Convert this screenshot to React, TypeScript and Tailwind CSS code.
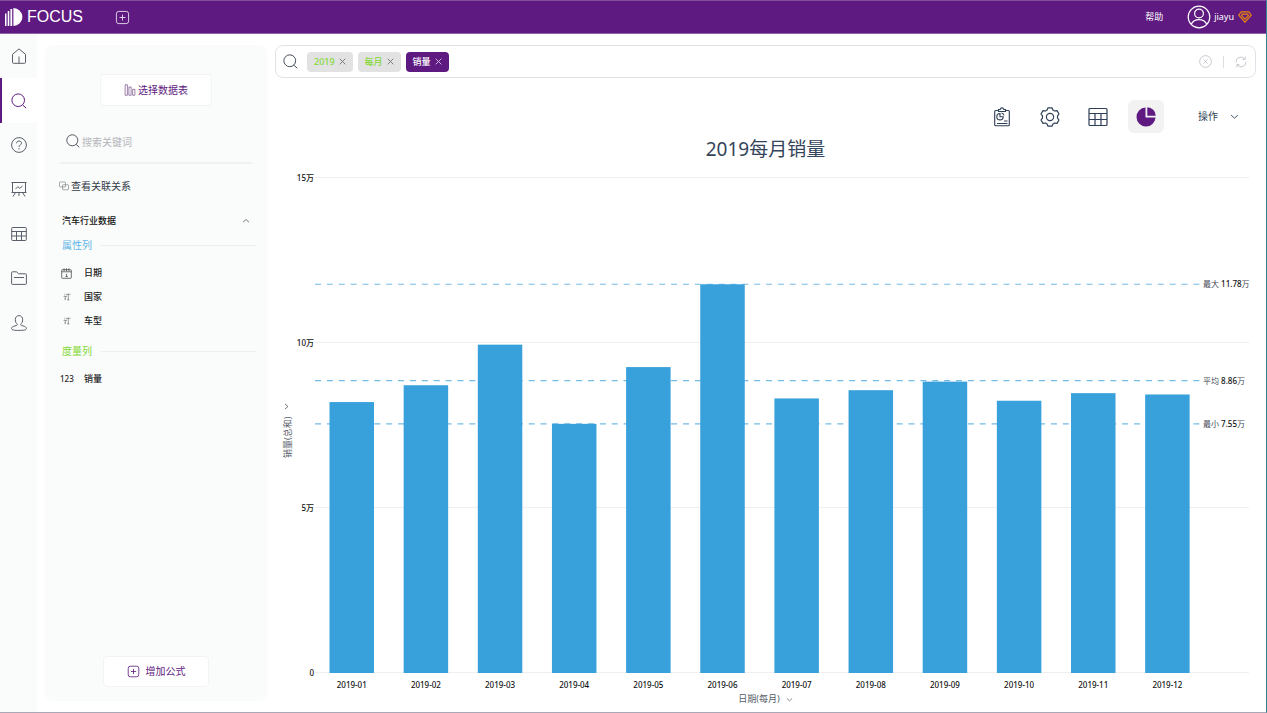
import { useState } from 'react';
import type { ReactNode } from 'react';

type IconProps = { size?: number; className?: string };

// 16x16 の線画アイコン共通ラッパー
function Line({ size = 16, className, children }: IconProps & { children: ReactNode }) {
  return (
    <svg
      width={size}
      height={size}
      viewBox="0 0 16 16"
      fill="none"
      stroke="currentColor"
      strokeWidth={1}
      className={className}
      aria-hidden="true"
    >
      {children}
    </svg>
  );
}

const HomeIcon = (p: IconProps) => (
  <Line {...p}>
    <path d="M1.5 6.3 8 .9l6.5 5.4v8.2a.8.8 0 0 1-.8.8H2.3a.8.8 0 0 1-.8-.8zM8 8.500v6.800" />
  </Line>
);

const SearchIcon = (p: IconProps) => (
  <Line {...p}>
    <circle cx="7.2" cy="7.2" r="6.3" />
    <path d="m11.6 11.900 3.600 3.300" />
  </Line>
);

const HelpIcon = (p: IconProps) => (
  <Line {...p}>
    <circle cx="8" cy="8" r="7.4" />
    <path d="M5.600 6.300C5.600 4.800 6.600 4 8 4s2.500.9 2.500 2.200c0 1.800-2.500 1.700-2.500 3.800M8 11.200v1.300" />
  </Line>
);

const BoardIcon = (p: IconProps) => (
  <Line {...p}>
    <path d="M.5 1.500h15M1.500 1.500v9.500M14.500 1.500v9.500M.5 11.500h15M4.500 11.500 2 15.500M11.500 11.500l2.500 4M8 11.500V15M4.500 8l2.300-2.300 2 1.600L11.500 5" />
  </Line>
);

const TableIcon = (p: IconProps) => (
  <Line {...p}>
    <rect x=".7" y="1.5" width="14.600" height="13" rx="1" />
    <path d="M.7 5.500h14.600M.7 10h14.600M5.500 5.500v9M10.500 5.500v9" />
  </Line>
);

const FolderIcon = (p: IconProps) => (
  <Line {...p}>
    <path d="M.6 13.500v-11a.7.7 0 0 1 .7-.7h4.400l1.800 2h7.200a.7.7 0 0 1 .7.7v9a.9.9 0 0 1-.9.9h-13a.9.9 0 0 1-.9-.9zM3 7.500h10" />
  </Line>
);

const UserIcon = (p: IconProps) => (
  <Line {...p}>
    <path d="M6.400 9.200C5 8.300 4.300 6.500 4.300 4.700 4.300 2.300 5.800.6 8 .6s3.700 1.700 3.700 4.100c0 1.800-.7 3.600-2.100 4.500 0 1 .8 1.300 2.400 1.700 2 .5 3.400 1.100 3.400 2.600 0 1.600-3 1.900-7.400 1.900S.6 15.100.6 13.500c0-1.500 1.400-2.100 3.400-2.600 1.600-.4 2.400-.7 2.400-1.700z" />
  </Line>
);

const PlusBoxIcon = (p: IconProps) => (
  <Line {...p}>
    <rect x="1.500" y="1.500" width="13" height="13" rx="2.500" />
    <path d="M8 4.800v6.400M4.800 8h6.400" />
  </Line>
);

const ColumnsIcon = (p: IconProps) => (
  <Line {...p}>
    <path d="M1.500 1h3v14h-3zM6.500 4h3v11h-3zM11.500 7h3v8h-3z" />
  </Line>
);

const RelationIcon = (p: IconProps) => (
  <Line {...p}>
    <rect x=".8" y="1.500" width="9.500" height="8" rx="1" />
    <rect x="5.700" y="6" width="9.500" height="8" rx="1" />
  </Line>
);

const CalendarIcon = (p: IconProps) => (
  <Line {...p}>
    <rect x="1" y="2.500" width="14" height="12.500" rx="1" />
    <path d="M1 5.500h14M4.500.5v4M8 .5v4M11.500.5v4M7 9h1.200v3.500M6.500 12.500h3.500" />
  </Line>
);

const TextTypeIcon = (p: IconProps) => (
  <Line {...p}>
    <path d="M6 2.500h9M10.500 2.500v11.500M8.500 14h4M1 6.500h7M4.500 6.500v6M3 12.500h3M2.500 2.500h1.500" />
  </Line>
);

const CloseIcon = (p: IconProps) => (
  <Line {...p}>
    <path d="m1.500 1.500 13 13M14.500 1.500l-13 13" strokeWidth={2} />
  </Line>
);

const ClearIcon = (p: IconProps) => (
  <Line {...p}>
    <circle cx="8" cy="8" r="7.200" />
    <path d="m5.500 5.500 5 5M10.500 5.500l-5 5" />
  </Line>
);

const RefreshIcon = (p: IconProps) => (
  <Line {...p}>
    <path d="M1.500 8.500A6.300 6.300 0 0 1 12.800 4M14.500 7.500A6.300 6.300 0 0 1 3.200 12M13.500 1v3.500H10M2.500 15v-3.500H6" strokeWidth={1.100} />
  </Line>
);

const ChevronIcon = (p: IconProps) => (
  <Line {...p}>
    <path d="m2 5.500 6 5.500 6-5.500" strokeWidth={1.600} />
  </Line>
);

function LogoMark() {
  return (
    <svg width="18" height="18" viewBox="0 0 18 18" fill="#fff" aria-hidden="true">
      <path d="M0 5.500h1.500V18H0zM2.700 3h1.600v15H2.700zM5.400 1h1.800v17H5.400zM8.400 0A9 9 0 0 1 8.400 18z" />
    </svg>
  );
}

function AvatarIcon() {
  return (
    <svg width="24" height="24" viewBox="0 0 24 24" fill="none" stroke="#fff" strokeWidth="1.200" aria-hidden="true">
      <circle cx="12" cy="12" r="10.800" />
      <circle cx="12" cy="8.500" r="4.400" />
      <path d="M4.200 19.300c1.600-3.200 4.400-4.600 7.800-4.600s6.200 1.400 7.800 4.600" />
    </svg>
  );
}

function DiamondIcon() {
  return (
    <svg width="14" height="12" viewBox="0 0 14 12" fill="none" stroke="#e8850c" strokeWidth="1.200" aria-hidden="true">
      <path d="M3.200.9h7.600l2.500 3.300L7 11.200.7 4.200z" />
      <path d="M4.500 3.200h5l1 1.300L7 8.200 3.500 4.500z" />
    </svg>
  );
}

function ReportIcon() {
  return (
    <svg width="20" height="20" viewBox="0 0 20 20" fill="none" stroke="currentColor" strokeWidth="1.100" aria-hidden="true">
      <path d="M6.500 3.500H3.700a1 1 0 0 0-1 1v13.300a1 1 0 0 0 1 1h12.600a1 1 0 0 0 1-1V4.500a1 1 0 0 0-1-1h-2.800" />
      <path d="M6.500 4.500v-2h1.700C8.400 1.400 9 .9 10 .9s1.600.5 1.800 1.600h1.700v2z" />
      <path d="M8 6.500a3.200 3.200 0 1 0 3.200 3.200H8z" />
      <path d="M9.500 6a3 3 0 0 1 2.500 2.500M12 14h3.500M5 16.500h10.500" />
    </svg>
  );
}

function GearIcon() {
  return (
    <svg width="20" height="20" viewBox="0 0 20 20" fill="none" stroke="currentColor" strokeWidth="1.200" strokeLinejoin="round" aria-hidden="true">
      <path d="M8 .8h4l.9 2.200c.6.300 1.200.6 1.700 1l2.400-.4 2 3.400-1.500 1.900c.1.700.1 1.500 0 2.200L19 13l-2 3.400-2.400-.4c-.5.4-1.100.7-1.700 1l-.9 2.200H8L7.100 17c-.6-.3-1.200-.6-1.700-1l-2.400.4L1 13l1.500-1.900c-.1-.7-.1-1.500 0-2.200L1 7l2-3.400 2.400.4c.5-.4 1.100-.7 1.700-1z" />
      <circle cx="10" cy="10" r="3.600" />
    </svg>
  );
}

function GridIcon() {
  return (
    <svg width="20" height="20" viewBox="0 0 20 20" fill="none" stroke="currentColor" strokeWidth="1.200" aria-hidden="true">
      <rect x="1" y="1.500" width="18" height="17" rx="1" />
      <path d="M1 6.500h18M1 12.500h18M7 6.500v12M13 6.500v12" />
    </svg>
  );
}

function PieIcon() {
  return (
    <svg width="20" height="20" viewBox="0 0 20 20" fill="#5e1a80" aria-hidden="true">
      <path d="M9.500.5v10h10A9.500 9.500 0 1 1 9.500.5z" />
      <path d="M11.300.2a8.700 8.700 0 0 1 8.500 8.500h-8.500z" />
    </svg>
  );
}

const navItems = [
  { label: '首页', Icon: HomeIcon },
  { label: '搜索', Icon: SearchIcon },
  { label: '帮助', Icon: HelpIcon },
  { label: '看板', Icon: BoardIcon },
  { label: '数据表', Icon: TableIcon },
  { label: '资源', Icon: FolderIcon },
  { label: '用户', Icon: UserIcon },
];

const initialTags = [
  { text: '2019', kind: 'filter' },
  { text: '每月', kind: 'filter' },
  { text: '销量', kind: 'measure' },
];

const sales = [
  { month: '2019-01', value: 8.21 },
  { month: '2019-02', value: 8.72 },
  { month: '2019-03', value: 9.95 },
  { month: '2019-04', value: 7.55 },
  { month: '2019-05', value: 9.27 },
  { month: '2019-06', value: 11.78 },
  { month: '2019-07', value: 8.32 },
  { month: '2019-08', value: 8.57 },
  { month: '2019-09', value: 8.83 },
  { month: '2019-10', value: 8.25 },
  { month: '2019-11', value: 8.48 },
  { month: '2019-12', value: 8.44 },
];

const ticks = [
  { value: 15, label: '15万' },
  { value: 10, label: '10万' },
  { value: 5, label: '5万' },
  { value: 0, label: '0' },
];

const refLines = [
  { name: '最大', value: 11.78 },
  { name: '平均', value: 8.86 },
  { name: '最小', value: 7.55 },
];

// グラフ座標
const BASE = 505;
const UNIT = 33;
const LEFT = 40;
const STEP = 74.15;
const BAR = 44.5;
const yOf = (v: number) => BASE - v * UNIT;

function SalesChart() {
  return (
    <svg viewBox="0 0 981 524" className="mt-[7px] block h-auto w-full text-[8px]" role="img" aria-label="2019每月销量">
      {ticks.map((t) => (
        <g key={t.value}>
          <line x1={LEFT} x2={974} y1={yOf(t.value) - 0.5} y2={yOf(t.value) - 0.5} stroke="#efefef" />
          <text x={LEFT - 1} y={yOf(t.value) + 3} textAnchor="end" fill="#111" className="font-medium">
            {t.label}
          </text>
        </g>
      ))}

      {refLines.map((r) => (
        <g key={r.name}>
          <line
            x1={LEFT}
            x2={926}
            y1={yOf(r.value)}
            y2={yOf(r.value)}
            stroke="#74bbe6"
            strokeWidth={1.2}
            strokeDasharray="6 5.87"
          />
          <text x={928} y={yOf(r.value) + 3} fill="#444b55">
            {r.name} <tspan fill="#111" className="font-medium">{r.value}</tspan>万
          </text>
        </g>
      ))}

      {sales.map((s, i) => (
        <g key={s.month}>
          <rect x={54.5 + i * STEP} y={yOf(s.value)} width={BAR} height={s.value * UNIT} fill="#38a1db" />
          <text x={54.5 + i * STEP + BAR / 2} y={520} textAnchor="middle" fill="#111" className="font-medium">
            {s.month}
          </text>
        </g>
      ))}

      <g fill="#555c66" transform="translate(16 290) rotate(-90)">
        <text className="text-[9px]">销量(总和)</text>
        <path d="m49-6 2.500 3 2.500-3" fill="none" stroke="#555c66" strokeWidth={0.8} />
      </g>
    </svg>
  );
}

function Field({ icon, name }: { icon: ReactNode; name: string }) {
  return (
    <li>
      <button className="flex h-6 w-full items-center text-[9px] font-medium text-[#222]">
        <span className="flex w-6 items-center">{icon}</span>
        {name}
      </button>
    </li>
  );
}

function GroupTitle({ children, color }: { children: ReactNode; color: string }) {
  return (
    <div className={`flex items-center gap-2 pl-0.5 text-[10px] leading-4 ${color}`}>
      {children}
      <span className="h-px flex-1 bg-[#eef0f0]" />
    </div>
  );
}

function Sidebar() {
  const [open, setOpen] = useState(true);

  return (
    <aside className="my-[11px] ml-2 flex w-[222px] flex-shrink-0 flex-col rounded-lg bg-[#fafcfb] px-[11px] pb-[14px] pt-[29px]">
      <button className="flex h-8 w-28 items-center justify-center gap-0.5 self-center rounded border border-[#f1f3f5] bg-white text-[10px] text-[#5e1a80]">
        <ColumnsIcon size={12} className="text-[#7d5a92]" />
        选择数据表
      </button>

      <label className="mx-1 mt-6 flex h-[34px] items-start gap-0.5 border-b-2 border-[#f0f2f2] pl-[6px] pt-1">
        <SearchIcon size={14} className="flex-shrink-0 text-[#3d4450]" />
        <input
          type="text"
          aria-label="搜索关键词"
          placeholder="搜索关键词"
          className="h-4 w-full min-w-0 bg-transparent text-[10px] outline-none placeholder:text-[#b3b3ba]"
        />
      </label>

      <button className="ml-[3px] mt-[14px] flex h-4 items-center gap-0.5 text-[10px] text-[#333b47]">
        <RelationIcon size={10} className="text-[#777]" />
        查看关联关系
      </button>

      <button
        className="mt-[19px] flex h-4 items-center justify-between px-[6px] text-[9px] font-medium text-[#111]"
        aria-expanded={open}
        onClick={() => setOpen(!open)}
      >
        汽车行业数据
        <ChevronIcon size={8} className="rotate-180 text-[#555]" />
      </button>

      {open && (
        <div className="mt-2 pl-1">
          <GroupTitle color="text-[#5db4e6]">属性列</GroupTitle>
          <ul className="mt-2">
            <Field icon={<CalendarIcon size={11} className="ml-px text-[#333]" />} name="日期" />
            <Field icon={<TextTypeIcon size={8} className="ml-[3px] text-[#333]" />} name="国家" />
            <Field icon={<TextTypeIcon size={8} className="ml-[3px] text-[#333]" />} name="车型" />
          </ul>
          <div className="mt-[10px]">
            <GroupTitle color="text-[#84d936]">度量列</GroupTitle>
          </div>
          <ul className="mt-2">
            <Field icon={<span className="text-[8px]">123</span>} name="销量" />
          </ul>
        </div>
      )}

      <button className="mt-auto flex h-[31px] w-[106px] items-center justify-center gap-[6px] self-center rounded border border-[#f1f3f5] bg-white text-[10px] text-[#5e1a80]">
        <PlusBoxIcon size={13} />
        增加公式
      </button>
    </aside>
  );
}

function SearchBar() {
  const [tags, setTags] = useState(initialTags);

  return (
    <div className="flex h-[33px] items-center rounded-lg border border-[#dfe3e8] pl-[7px] pr-2">
      <SearchIcon size={15} className="flex-shrink-0 text-[#3d4450]" />
      <div className="ml-[9px] flex gap-[5px]">
        {tags.map((tag) => (
          <span
            key={tag.text}
            className={`flex h-5 items-center gap-1 rounded px-[7px] text-[9px] font-medium ${
              tag.kind === 'filter' ? 'bg-[#e2e2e2] text-[#84d936]' : 'bg-[#5e1a80] text-white'
            }`}
          >
            {tag.text}
            <button
              aria-label={`删除 ${tag.text}`}
              className={tag.kind === 'filter' ? 'text-[#6b7078]' : 'text-[#d8c8e2]'}
              onClick={() => setTags(tags.filter((t) => t !== tag))}
            >
              <CloseIcon size={7} />
            </button>
          </span>
        ))}
      </div>
      <input type="text" aria-label="搜索" className="mx-2 h-5 min-w-0 flex-1 bg-transparent text-[10px] outline-none" />
      <button aria-label="清空" className="text-[#b9bcc2]" onClick={() => setTags([])}>
        <ClearIcon size={13} />
      </button>
      <span className="mx-[11px] h-3 w-px bg-[#dcdee2]" />
      <button aria-label="刷新" className="text-[#b9bcc2]">
        <RefreshIcon size={12} />
      </button>
    </div>
  );
}

function Toolbar() {
  return (
    <div className="mt-[22px] flex justify-end gap-3 pr-[17px] text-[#2f3f55]">
      <button aria-label="报告" className="flex h-[33px] w-9 items-center justify-center">
        <ReportIcon />
      </button>
      <button aria-label="设置" className="flex h-[33px] w-9 items-center justify-center">
        <GearIcon />
      </button>
      <button aria-label="表格" className="flex h-[33px] w-9 items-center justify-center">
        <GridIcon />
      </button>
      <button aria-label="图表" className="flex h-[33px] w-9 items-center justify-center rounded-md bg-[#f2f2f2]">
        <PieIcon />
      </button>
      <button className="flex h-[33px] items-center gap-3 pl-[22px] text-[10px]">
        操作
        <ChevronIcon size={9} />
      </button>
    </div>
  );
}

export default function App() {
  return (
    <div className="flex min-h-screen flex-col border-b border-r border-b-[#a9a8b6] border-r-[#2f8496] bg-white font-['Noto_Sans','Noto_Sans_CJK_SC',sans-serif]">
      {/* ヘッダー */}
      <header className="flex h-[34px] flex-shrink-0 items-center border-y border-t-[#81509b] border-b-[#8f64a6] bg-[#5e1a80] pl-[5px] pr-[14px] text-white">
        <a href="#" className="flex items-center gap-1 font-['Liberation_Sans',sans-serif] text-base">
          <LogoMark />
          FOCUS
        </a>
        <button aria-label="新建" className="ml-8 text-[#e4d8ea]">
          <PlusBoxIcon size={15} />
        </button>
        <a href="#" className="ml-auto text-[9px]">
          帮助
        </a>
        <button className="ml-6 flex items-center gap-[3px] text-[9px]">
          <AvatarIcon />
          jiayu
          <span className="ml-px">
            <DiamondIcon />
          </span>
        </button>
      </header>

      <div className="flex flex-1">
        {/* 左ナビ */}
        <nav className="w-[37px] flex-shrink-0 bg-[#fafcfb]">
          <ul className="grid h-[311px] grid-rows-7">
            {navItems.map(({ label, Icon }) => (
              <li key={label} className="flex">
                <a
                  href="#"
                  aria-label={label}
                  className={`flex flex-1 items-center justify-center border-l-2 pr-0.5 ${
                    label === '搜索' ? 'border-[#5e1a80] bg-white text-[#5e1a80]' : 'border-transparent text-[#5a5f6a]'
                  }`}
                >
                  <Icon size={16} />
                </a>
              </li>
            ))}
          </ul>
        </nav>

        <Sidebar />

        <main className="ml-2 mr-[10px] flex min-w-0 flex-1 flex-col pt-[11px]">
          <SearchBar />
          <Toolbar />
          <h1 className="mt-1 text-center text-[19px] leading-6 text-[#34445a]">2019每月销量</h1>
          <SalesChart />
          <button className="flex h-[14px] items-center gap-[6px] self-center text-[9px] text-[#555c66]">
            日期(每月)
            <ChevronIcon size={7} />
          </button>
        </main>
      </div>
    </div>
  );
}
